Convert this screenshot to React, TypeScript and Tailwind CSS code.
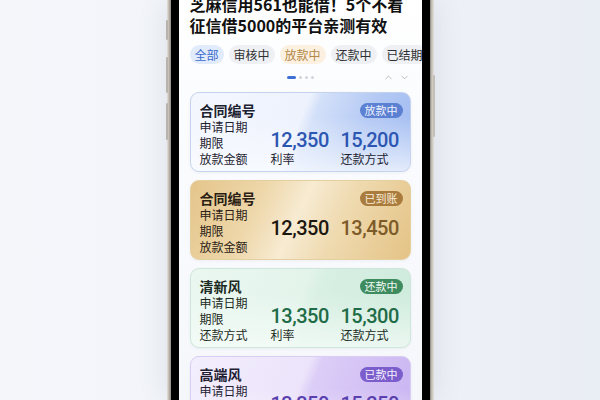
import React from "react";
import { ChevronUp, ChevronDown } from "lucide-react";

type Card = {
  title: string;
  rows: string[];
  badge: string;
  n1: string;
  n2: string;
  l1?: string;
  l2?: string;
  bg: string;
  border: string;
  badgeCls: string;
  n1Cls: string;
  n2Cls: string;
  text: string;
};

const cards: Card[] = [
  {
    title: "合同编号",
    rows: ["申请日期", "期限", "放款金额"],
    badge: "放款中",
    n1: "12,350",
    n2: "15,200",
    l1: "利率",
    l2: "还款方式",
    bg: "bg-[linear-gradient(180deg,rgba(255,255,255,0)_30%,rgba(250,252,255,0.75)_100%),linear-gradient(112deg,#f4f7fe_0%,#edf2fd_48%,#d3e0f9_53%,#b4c9f4_75%,#9fbaf1_100%)]",
    border: "border-[#c6d3ee]",
    badgeCls: "bg-[#5c80d2] text-[#eef3ff]",
    n1Cls: "text-[#2c56b1]",
    n2Cls: "text-[#2c56b1]",
    text: "text-[#1d2230]",
  },
  {
    title: "合同编号",
    rows: ["申请日期", "期限", "放款金额"],
    badge: "已到账",
    n1: "12,350",
    n2: "13,450",
    bg: "bg-[linear-gradient(115deg,#e4c58b_0%,#eed7aa_30%,#f7ebd2_48%,#efdab0_66%,#e4c385_100%)]",
    border: "border-[#e6cf9f]",
    badgeCls: "bg-[#a97b3d] text-[#fbefd9]",
    n1Cls: "text-[#1c1710]",
    n2Cls: "text-[#7d5b29]",
    text: "text-[#2a2114]",
  },
  {
    title: "清新风",
    rows: ["申请日期", "期限", "还款方式"],
    badge: "还款中",
    n1: "13,350",
    n2: "15,300",
    l1: "利率",
    l2: "还款方式",
    bg: "bg-[linear-gradient(180deg,rgba(255,255,255,0)_30%,rgba(248,253,250,0.7)_100%),linear-gradient(112deg,#eaf7f0_0%,#e3f4eb_48%,#d8efe3_55%,#cceadb_100%)]",
    border: "border-[#cfe6da]",
    badgeCls: "bg-[#3f8b60] text-[#effaf3]",
    n1Cls: "text-[#1f6c48]",
    n2Cls: "text-[#1f6c48]",
    text: "text-[#1b2a22]",
  },
  {
    title: "高端风",
    rows: ["申请日期", "期限", "放款金额"],
    badge: "已款中",
    n1: "13,350",
    n2: "15,250",
    l1: "利率",
    l2: "还款方式",
    bg: "bg-[linear-gradient(180deg,rgba(255,255,255,0)_40%,rgba(250,248,255,0.6)_100%),linear-gradient(112deg,#f3eefd_0%,#ece4fb_48%,#dccdf7_53%,#c8b3f1_100%)]",
    border: "border-[#d9cdf3]",
    badgeCls: "bg-[#7b5dcc] text-[#f5f0ff]",
    n1Cls: "text-[#5a3fae]",
    n2Cls: "text-[#5a3fae]",
    text: "text-[#231d33]",
  },
];

const tabs = [
  { label: "全部", cls: "bg-[#e2ebfb] text-[#3a6bcc]" },
  { label: "审核中", cls: "bg-[#eef0f3] text-[#2d2f33]" },
  { label: "放款中", cls: "bg-[#fcf1e0] text-[#b38747]" },
  { label: "还款中", cls: "bg-[#eef0f3] text-[#2d2f33]" },
  { label: "已结期", cls: "bg-[#eef0f3] text-[#2d2f33]" },
];

const cjk = "font-['Noto_Sans_CJK_SC','Noto_Sans',sans-serif]";
const num = "font-['Roboto','Liberation_Sans',sans-serif]";

function LoanCard({ c }: { c: Card }) {
  return (
    <div
      className={`flex h-[80px] shrink-0 flex-col rounded-[9px] border pl-[9px] pr-[7px] pt-[8px] shadow-[0_1px_3px_rgba(40,60,100,0.06)] ${c.bg} ${c.border} ${c.text}`}
    >
      <div className="flex h-[18px] items-center justify-between">
        <span className="text-[14px] font-bold leading-[18px]">{c.title}</span>
        <span
          className={`rounded-full px-[5px] text-[11px] leading-[15px] ${c.badgeCls}`}
        >
          {c.badge}
        </span>
      </div>
      <div className="flex items-end">
        <div className="flex w-[71px] flex-col text-[12px] leading-[16px]">
          {c.rows.map((r) => (
            <span key={r}>{r}</span>
          ))}
        </div>
        <div className="flex w-[70px] flex-col">
          <span
            className={`${num} text-[20px] font-medium leading-[22px] tracking-tight ${c.n1Cls}`}
          >
            {c.n1}
          </span>
          <span className="h-[16px] text-[12px] leading-[16px]">{c.l1}</span>
        </div>
        <div className="flex flex-col">
          <span
            className={`${num} text-[20px] font-medium leading-[22px] tracking-tight ${c.n2Cls}`}
          >
            {c.n2}
          </span>
          <span className="h-[16px] text-[12px] leading-[16px]">{c.l2}</span>
        </div>
      </div>
    </div>
  );
}

export default function App() {
  return (
    <div
      className={`flex h-[400px] w-[600px] justify-center overflow-hidden bg-[linear-gradient(90deg,#f4f6fa_0%,#f0f3f8_60%,#e9edf4_100%)] ${cjk}`}
    >
      <div className="relative h-[400px] w-[267px] bg-[#8f8a82] px-[4px] shadow-[0_0_28px_rgba(60,70,90,0.12)]">
        {/* frame edges */}
        <div className="absolute inset-y-0 left-0 w-[4px] bg-[linear-gradient(90deg,#e4e1db,#b5b0a7_60%,#8c877f)]" />
        <div className="absolute inset-y-0 right-0 w-[4px] bg-[linear-gradient(90deg,#8c877f,#c2bdb4_40%,#e4e1db)]" />
        {/* side buttons */}
        <div className="absolute left-[-1px] top-[20px] h-[20px] w-[2px] rounded-sm bg-[#b9b4ab]" />
        <div className="absolute left-[-1px] top-[57px] h-[36px] w-[2px] rounded-sm bg-[#b9b4ab]" />
        <div className="absolute left-[-1px] top-[103px] h-[37px] w-[2px] rounded-sm bg-[#b9b4ab]" />
        <div className="absolute right-[-1px] top-[75px] h-[62px] w-[2px] rounded-sm bg-[#c4bfb6]" />

        <div className="relative h-full bg-black px-[8px]">
          <div className="flex h-full flex-col overflow-hidden bg-[linear-gradient(180deg,#ffffff_0%,#fbfcfe_25%,#f5f7fb_100%)] px-[11px]">
            <h1 className="-mt-[6px] text-[16px] font-bold leading-[21px] text-[#111]">
              芝麻信用561也能借！5个不看
              <br />
              征信借5000的平台亲测有效
            </h1>

            <div className="mt-[9px] flex gap-[5px]">
              {tabs.map((t) => (
                <span
                  key={t.label}
                  className={`flex h-[19px] shrink-0 items-center whitespace-nowrap rounded-full px-[5px] text-[12px] ${t.cls}`}
                >
                  {t.label}
                </span>
              ))}
            </div>

            <div className="mt-[8px] grid h-[10px] grid-cols-[1fr_auto_1fr] items-center">
              <div />
              <div className="flex items-center gap-[3px]">
                <span className="h-[3px] w-[9px] rounded-full bg-[#3d6fd6]" />
                <span className="h-[3px] w-[3px] rounded-full bg-[#cfd4dc]" />
                <span className="h-[3px] w-[3px] rounded-full bg-[#cfd4dc]" />
                <span className="h-[3px] w-[3px] rounded-full bg-[#cfd4dc]" />
              </div>
              <div className="flex items-center justify-end gap-[5px] pr-[1px] text-[#9aa0aa]">
                <ChevronUp size={11} strokeWidth={1.5} />
                <ChevronDown size={11} strokeWidth={1.5} />
              </div>
            </div>

            <div className="mt-[10px] flex flex-col gap-[8px]">
              {cards.map((c, i) => (
                <LoanCard key={i} c={c} />
              ))}
            </div>
          </div>
        </div>
      </div>
    </div>
  );
}
